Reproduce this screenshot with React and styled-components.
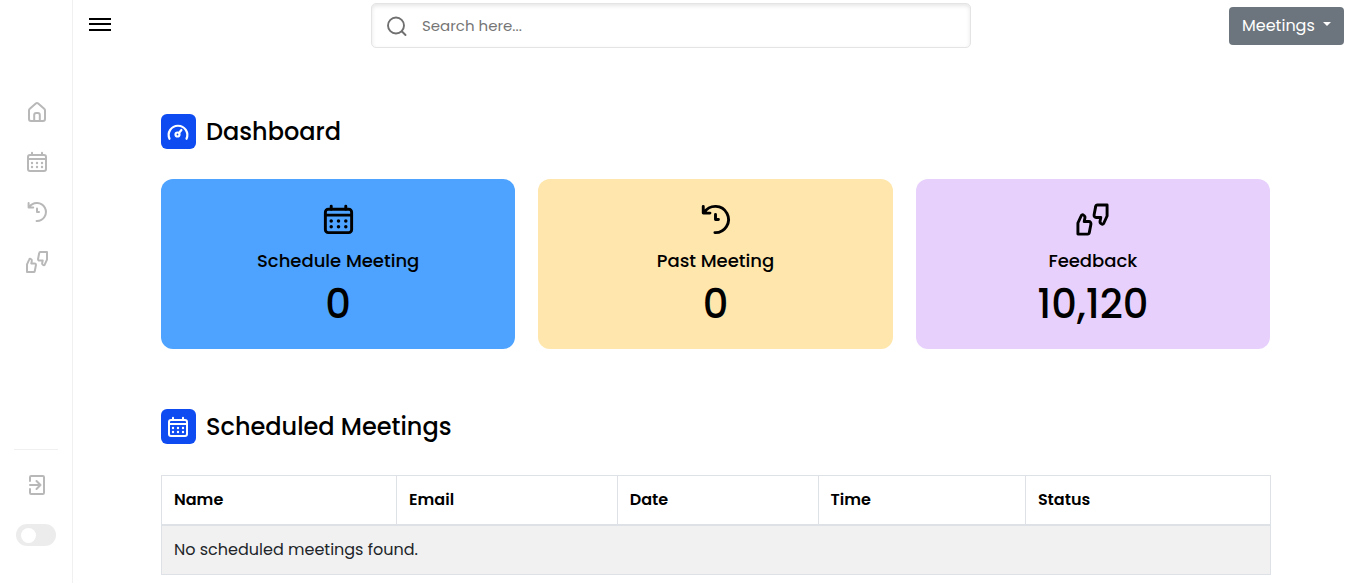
import React from "react";
import styled, { createGlobalStyle } from "styled-components";

const GlobalStyle = createGlobalStyle`
  *, *::before, *::after { box-sizing: border-box; }
  body {
    margin: 0;
    background: #fff;
    color: #000;
    font-family: "Poppins", "Inter", "Liberation Sans", sans-serif;
    font-size: 16px;
    line-height: 24px;
  }
`;

const Page = styled.div`
  display: flex;
  min-height: 100vh;
`;

const Sidebar = styled.nav`
  flex: 0 0 73px;
  display: flex;
  flex-direction: column;
  justify-content: space-between;
  padding: 87px 14px 23px;
  border-right: 1px solid #f0f0f0;
`;

const SideList = styled.ul`
  list-style: none;
  margin: 0;
  padding: 0;
  border-top: ${(p) => (p.$divided ? "1px solid #f0f0f0" : "0")};
  padding-top: ${(p) => (p.$divided ? "10px" : "0")};
`;

const SideItem = styled.li`
  height: 50px;
  display: flex;
  align-items: center;
  justify-content: center;
`;

const SideLink = styled.a`
  display: flex;
  padding-left: 1px;
  color: #b8b8b8;
`;

const Switch = styled.input`
  appearance: none;
  display: flex;
  align-items: center;
  width: 40px;
  height: 22px;
  margin: 0;
  padding: 0 5px;
  border-radius: 11px;
  background: #ececec;
  cursor: pointer;

  &::before {
    content: "";
    width: 15px;
    height: 15px;
    border-radius: 50%;
    background: #fff;
  }
  &:checked { justify-content: flex-end; }
`;

const Content = styled.div`
  flex: 1;
  min-width: 0;
`;

const TopBar = styled.header`
  display: flex;
  align-items: center;
  justify-content: space-between;
  padding: 3px 14px 2px;
`;

const IconButton = styled.button`
  display: flex;
  padding: 0 2px 1px;
  border: 0;
  background: none;
  color: #000;
  cursor: pointer;
`;

const SearchBox = styled.label`
  display: flex;
  align-items: center;
  gap: 13px;
  width: 600px;
  height: 45px;
  padding: 0 13px;
  border: 1px solid #e4e4e4;
  border-radius: 5px;
  box-shadow: inset 0 2px 4px rgba(0, 0, 0, 0.1);
  color: #707070;
`;

const SearchInput = styled.input`
  flex: 1;
  min-width: 0;
  padding: 0;
  border: 0;
  outline: 0;
  background: none;
  font: inherit;
  font-size: 15px;
  &::placeholder { color: #757575; opacity: 1; }
`;

const MenuButton = styled.button`
  display: flex;
  align-items: center;
  gap: 8px;
  width: 115px;
  height: 38px;
  padding: 0 13px;
  border: 0;
  border-radius: 4px;
  background: #6c757d;
  color: #fff;
  font: inherit;
  white-space: nowrap;
  cursor: pointer;

  &::after {
    content: "";
    margin-bottom: 4px;
    border-top: 4px solid #fff;
    border-left: 4px solid transparent;
    border-right: 4px solid transparent;
  }
`;

const Main = styled.main`
  padding: 64px 87px 8px 88px;
`;

const Title = styled.div`
  display: flex;
  align-items: center;
  gap: 10px;
  margin-bottom: ${(p) => p.$gap}px;
`;

const TitleIcon = styled.span`
  display: flex;
  align-items: center;
  justify-content: center;
  width: 35px;
  height: 35px;
  padding-right: 1px;
  border-radius: 6px;
  background: #0e4bf1;
  color: #fff;
`;

const Heading = styled.h2`
  margin: 0;
  font-size: 24px;
  font-weight: 500;
  line-height: 35px;
`;

const Cards = styled.div`
  display: grid;
  grid-template-columns: repeat(3, 1fr);
  gap: 23px;
  margin-bottom: 60px;
  padding-right: 1px;
`;

const Card = styled.section`
  display: flex;
  flex-direction: column;
  align-items: center;
  padding: 23px 20px 15px;
  border-radius: 12px;
  background: ${(p) => p.$color};
`;

const CardLabel = styled.span`
  margin-top: 10px;
  font-size: 18px;
  font-weight: 500;
  line-height: 27px;
`;

const CardValue = styled.span`
  font-size: 40px;
  font-weight: 500;
  line-height: 60px;
`;

const Table = styled.table`
  width: 100%;
  border-collapse: collapse;
  table-layout: fixed;
  border: 1px solid #dee2e6;
`;

const Th = styled.th`
  width: ${(p) => p.$width};
  padding: 12px;
  border: 1px solid #dee2e6;
  border-bottom-width: 2px;
  font-weight: 600;
  text-align: left;
`;

const Td = styled.td`
  padding: 12px;
  border: 1px solid #dee2e6;
  background: #f1f1f1;
  color: #212529;
`;

const Icon = ({ size = 24, stroke = 2, children }) => (
  <svg width={size} height={size} viewBox="0 0 24 24" fill="none" stroke="currentColor"
    strokeWidth={stroke} strokeLinecap="round" strokeLinejoin="round" aria-hidden="true">
    {children}
  </svg>
);

const HomeIcon = (p) => (
  <Icon {...p}>
    <path d="M4 10.4c0-.7.3-1.3.8-1.7l6-5.2a1.8 1.8 0 0 1 2.4 0l6 5.2c.5.4.8 1 .8 1.7V19a2 2 0 0 1-2 2H6a2 2 0 0 1-2-2z" />
    <path d="M9.2 21v-6a2 2 0 0 1 2-2h1.6a2 2 0 0 1 2 2v6" />
  </Icon>
);

const CalendarIcon = (p) => (
  <Icon {...p}>
    <rect x="3" y="5" width="18" height="16" rx="2" />
    <path d="M3 9h18M7 2.8V5M17 2.8V5" />
    <g fill="currentColor" stroke="none">
      {[7, 12, 17].map((x) => [13, 17].map((y) => <circle key={`${x}-${y}`} cx={x} cy={y} r="1.2" />))}
    </g>
  </Icon>
);

const HistoryIcon = (p) => (
  <Icon {...p}>
    <path d="M3.6 3v4.6h4.6M4.3 7.2A9 9 0 1 1 11.6 21M12 8.6V12h2" />
  </Icon>
);

const THUMB = "M2 22v-7.6L4.2 9.6c.3-.9 1.1-1 1.7-.6.8.5 1.1 1.1.9 2l-.5 2.4h3.2c1 0 1.6.8 1.4 1.8L9.8 21c-.1.6-.6 1-1.2 1z";

const ThumbsIcon = (p) => (
  <Icon {...p}>
    <path d={THUMB} />
    <path d={THUMB} transform="rotate(180 12 12)" />
  </Icon>
);

const ExitIcon = (p) => (
  <Icon {...p}>
    <path d="M5 8V4.2C5 3.5 5.5 3 6.2 3h11.6c.7 0 1.2.5 1.2 1.2v15.6c0 .7-.5 1.2-1.2 1.2H6.2C5.500 21 5 20.500 5 19.8V16M5 12h10.5M11.5 8l4 4-4 4" />
  </Icon>
);

const GaugeIcon = (p) => (
  <Icon stroke={2.2} {...p}>
    <path d="M3.5 18.8A9.3 9.3 0 1 1 20.5 18.8" />
    <circle cx="11.5" cy="14.5" r="2" />
    <path d="M13 13l2.4-3" />
  </Icon>
);

const SearchIcon = () => (
  <Icon stroke={1.9}>
    <circle cx="11" cy="11.5" r="8" />
    <path d="M17 17.5l3.5 3.5" />
  </Icon>
);

const BarsIcon = () => (
  <svg width="22" height="16" viewBox="0 0 22 16" fill="currentColor" aria-hidden="true">
    <path d="M0 1h22v2H0zM0 6h22v2H0zM0 12h22v2H0z" />
  </svg>
);

const NAV = [
  ["Home", HomeIcon],
  ["Schedule", CalendarIcon],
  ["History", HistoryIcon],
  ["Feedback", ThumbsIcon],
];

const CARDS = [
  { label: "Schedule Meeting", value: "0", color: "#4da3ff", icon: CalendarIcon },
  { label: "Past Meeting", value: "0", color: "#ffe6ac", icon: HistoryIcon },
  { label: "Feedback", value: "10,120", color: "#e7d1fc", icon: ThumbsIcon },
];

const COLUMNS = [
  ["Name", "21.2%"],
  ["Email", "19.9%"],
  ["Date", "18.1%"],
  ["Time", "18.7%"],
  ["Status", "22.1%"],
];

export default function App() {
  return (
    <>
      <GlobalStyle />
      <Page>
        <Sidebar>
          <SideList>
            {NAV.map(([name, Glyph]) => (
              <SideItem key={name}>
                <SideLink href="#" aria-label={name}><Glyph /></SideLink>
              </SideItem>
            ))}
          </SideList>
          <SideList $divided>
            <SideItem>
              <SideLink href="#" aria-label="Logout"><ExitIcon /></SideLink>
            </SideItem>
            <SideItem>
              <Switch type="checkbox" role="switch" aria-label="Dark mode" />
            </SideItem>
          </SideList>
        </Sidebar>
        <Content>
          <TopBar>
            <IconButton type="button" aria-label="Toggle sidebar"><BarsIcon /></IconButton>
            <SearchBox>
              <SearchIcon />
              <SearchInput type="text" placeholder="Search here..." aria-label="Search" />
            </SearchBox>
            <MenuButton type="button">Meetings</MenuButton>
          </TopBar>
          <Main>
            <Title $gap={30}>
              <TitleIcon><GaugeIcon /></TitleIcon>
              <Heading>Dashboard</Heading>
            </Title>
            <Cards>
              {CARDS.map(({ label, value, color, icon: Glyph }) => (
                <Card key={label} $color={color}>
                  <Glyph size={35} />
                  <CardLabel>{label}</CardLabel>
                  <CardValue>{value}</CardValue>
                </Card>
              ))}
            </Cards>
            <Title $gap={31}>
              <TitleIcon><CalendarIcon /></TitleIcon>
              <Heading>Scheduled Meetings</Heading>
            </Title>
            <Table>
              <thead>
                <tr>
                  {COLUMNS.map(([name, width]) => (
                    <Th key={name} $width={width} scope="col">{name}</Th>
                  ))}
                </tr>
              </thead>
              <tbody>
                <tr>
                  <Td colSpan={COLUMNS.length}>No scheduled meetings found.</Td>
                </tr>
              </tbody>
            </Table>
          </Main>
        </Content>
      </Page>
    </>
  );
}
